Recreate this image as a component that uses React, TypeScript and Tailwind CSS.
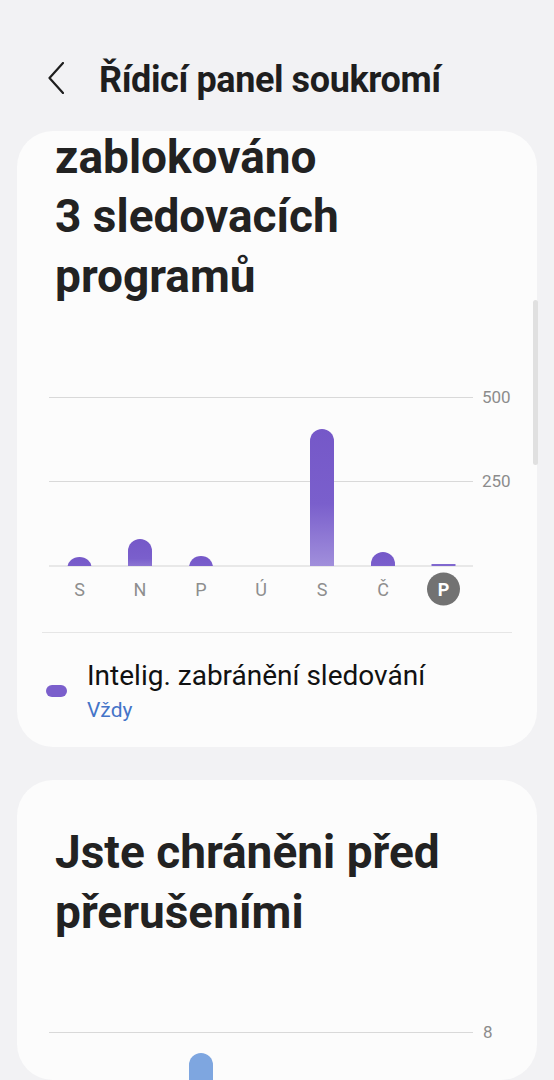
import React from "react";

const days = [
  { l: "S", x: 62.5, h: 9 },
  { l: "N", x: 123, h: 27 },
  { l: "P", x: 184, h: 10 },
  { l: "Ú", x: 244, h: 0 },
  { l: "S", x: 305, h: 137 },
  { l: "Č", x: 366, h: 14 },
  { l: "P", x: 426.5, h: 1 },
];

function Chart() {
  const base = 191;
  return (
    <svg width="520" height="240" viewBox="0 0 520 240" className="block shrink-0">
      <defs>
        <linearGradient id="barg" x1="0" y1="0" x2="0" y2="1">
          <stop offset="0" stopColor="#7558c8" />
          <stop offset="0.5" stopColor="#7a5fcc" />
          <stop offset="1" stopColor="#a898de" />
        </linearGradient>
        <clipPath id="above">
          <rect x="0" y="0" width="520" height={base} />
        </clipPath>
      </defs>
      <line x1="32" x2="456" y1="22.5" y2="22.5" stroke="#d9d9d9" strokeWidth="1" />
      <line x1="32" x2="456" y1="106.5" y2="106.5" stroke="#d9d9d9" strokeWidth="1" />
      <line x1="32" x2="456" y1="191" y2="191" stroke="#e2e2e2" strokeWidth="1.5" />
      <text x="465" y="22" dominantBaseline="central" fontSize="17" fill="#8c8c8c" fontFamily="Roboto, sans-serif">500</text>
      <text x="465" y="106" dominantBaseline="central" fontSize="17" fill="#8c8c8c" fontFamily="Roboto, sans-serif">250</text>
      {days.map((d, i) =>
        d.h > 2 ? (
          <rect
            key={i}
            x={d.x - 12}
            y={base - d.h}
            width="24"
            height={d.h + 12}
            rx="12"
            fill="url(#barg)"
            clipPath="url(#above)"
          />
        ) : d.h > 0 ? (
          <rect key={i} x={d.x - 12} y={base - 2} width="24" height="2" fill="#8068cf" />
        ) : null
      )}
      {days.map((d, i) =>
        i === 6 ? (
          <g key={"t" + i}>
            <circle cx={d.x} cy="214" r="16.5" fill="#727272" />
            <text x={d.x} y="214" textAnchor="middle" dominantBaseline="central" fontSize="18" fontWeight="700" fill="#ffffff" fontFamily="Roboto, sans-serif">{d.l}</text>
          </g>
        ) : (
          <text key={"t" + i} x={d.x} y="214" textAnchor="middle" dominantBaseline="central" fontSize="18" fill="#8e8e8e" fontFamily="Roboto, sans-serif">{d.l}</text>
        )
      )}
    </svg>
  );
}

export default function App() {
  return (
    <div className="relative h-[1080px] w-full overflow-hidden bg-[#f2f2f4] font-['Roboto',sans-serif] text-[#1e1e1e]">
      <header className="flex h-[131px] items-start pt-[60px]">
        <div className="flex h-[40px] items-center">
          <svg width="16" height="32" viewBox="0 0 16 32" className="ml-[48px] mt-[-5px]">
            <path d="M15 1 L1.5 16 L15 31" fill="none" stroke="#1e1e1e" strokeWidth="2.2" strokeLinecap="round" strokeLinejoin="round" />
          </svg>
          <h1 className="ml-[35px] text-[36px] font-bold leading-[40px] tracking-[-0.4px]">Řídicí panel soukromí</h1>
        </div>
      </header>

      <section className="mx-[17px] flex h-[616px] flex-col overflow-hidden rounded-[36px] bg-[#fcfcfc]">
        <div className="pl-[38px] text-[46px] font-bold text-[#222222]">
          <div className="leading-[52px]">zablokováno</div>
          <div className="mt-[3px] leading-[60px]">3 sledovacích</div>
          <div className="leading-[60px]">programů</div>
        </div>
        <div className="mt-[69px]">
          <Chart />
        </div>
        <div className="mx-[25px] mt-[17px] h-px bg-[#e6e6e6]" />
        <div className="mt-[27px] flex items-center pl-[29px]">
          <div className="h-[12px] w-[21px] rounded-full bg-[#7b5fcc]" />
          <div className="ml-[20px] flex flex-col">
            <span className="text-[28px] leading-[32px] text-[#111111]">Intelig. zabránění sledování</span>
            <span className="mt-[6px] text-[21px] leading-[24px] text-[#4474c8]">Vždy</span>
          </div>
        </div>
      </section>

      <section className="mx-[17px] mt-[33px] flex h-[300px] flex-col overflow-hidden rounded-[36px] bg-[#fcfcfc]">
        <div className="mt-[42px] pl-[38px] text-[46px] font-bold leading-[60px] text-[#222222]">
          <div>Jste chráněni před</div>
          <div>přerušeními</div>
        </div>
        <svg width="520" height="140" viewBox="0 0 520 140" className="mt-[37px] block shrink-0">
          <line x1="32" x2="456" y1="53.5" y2="53.5" stroke="#d9d9d9" strokeWidth="1" />
          <text x="466" y="53" dominantBaseline="central" fontSize="17" fill="#8c8c8c" fontFamily="Roboto, sans-serif">8</text>
          <rect x="172" y="74" width="24" height="80" rx="12" fill="#7ea6e0" />
        </svg>
      </section>

      <div className="absolute left-[533px] top-[300px] h-[165px] w-[5px] rounded-full bg-[#e0e0e0]" />
    </div>
  );
}
